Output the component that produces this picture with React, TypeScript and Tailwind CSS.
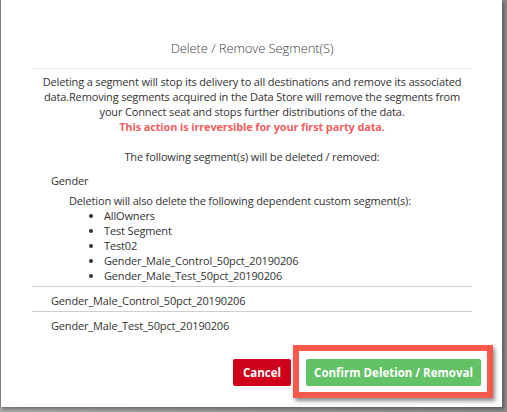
import React from "react";

export default function App() {
  const deps = [
    "AllOwners",
    "Test Segment",
    "Test02",
    "Gender_Male_Control_50pct_20190206",
    "Gender_Male_Test_50pct_20190206",
  ];
  return (
    <div
      className="w-[507px] h-[412px] overflow-hidden bg-[linear-gradient(to_right,#a9a9a9,#8a8a8a)] text-[#333]"
      style={{ fontFamily: '"Open Sans", "Liberation Sans", sans-serif' }}
    >
      <div className="w-[502px] h-[407px] bg-white border-l border-[#7a7a7a] shadow-[2px_2px_3px_rgba(0,0,0,0.35)]">
        <div className="pl-[31px] pr-[30px] text-[11px] leading-[15px] tracking-[-0.15px]">
          <div className="pt-[38px] pb-[10px] text-center text-[13px] leading-[20px] font-light tracking-[-0.1px] text-[#444]">
            Delete / Remove Segment(S)
          </div>
          <div className="border-t border-[#ececec]" />
          <div className="mt-[5px] text-center">
            <p>
              Deleting a segment will stop its delivery to all destinations and remove its associated
              data.Removing segments acquired in the Data Store will remove the segments from your
              Connect seat and stops further distributions of the data.
            </p>
            <p className="font-bold text-[#f06262]">This action is irreversible for your first party data.</p>
          </div>
          <div className="mt-[15px] text-center">
            The following segment(s) will be deleted / removed:
          </div>
          <div className="mt-[9px] pl-[19px]">Gender</div>
          <div className="mt-[5px] pl-[37px]">
            Deletion will also delete the following dependent custom segment(s):
          </div>
          <ul className="list-disc pl-[72px]">
            {deps.map((d) => (
              <li key={d}>{d}</li>
            ))}
          </ul>
          <div className="mt-[3px] border-t border-[#cfcfcf]" />
          <div className="pt-[6px] pb-[3px] pl-[19px]">Gender_Male_Control_50pct_20190206</div>
          <div className="border-t border-[#cfcfcf]" />
          <div className="pt-[6px] pl-[19px]">Gender_Male_Test_50pct_20190206</div>
        </div>
        <div className="mt-[12px] flex justify-end items-start pr-[9px]">
          <button className="mt-[14px] mr-[2px] w-[58px] h-[27px] rounded-[2px] bg-[#d0021b] text-white text-[11.5px] font-bold">
            Cancel
          </button>
          <div className="border-[6px] border-[#f8594b] bg-white pl-[7px] pr-[6px] pt-[8px] pb-[6px] shadow-[2px_3px_4px_rgba(0,0,0,0.45)]">
            <button className="block w-[175px] h-[27px] rounded-[2px] bg-[#63c266] text-white text-[11.5px] font-bold">
              Confirm Deletion / Removal
            </button>
          </div>
        </div>
      </div>
    </div>
  );
}
